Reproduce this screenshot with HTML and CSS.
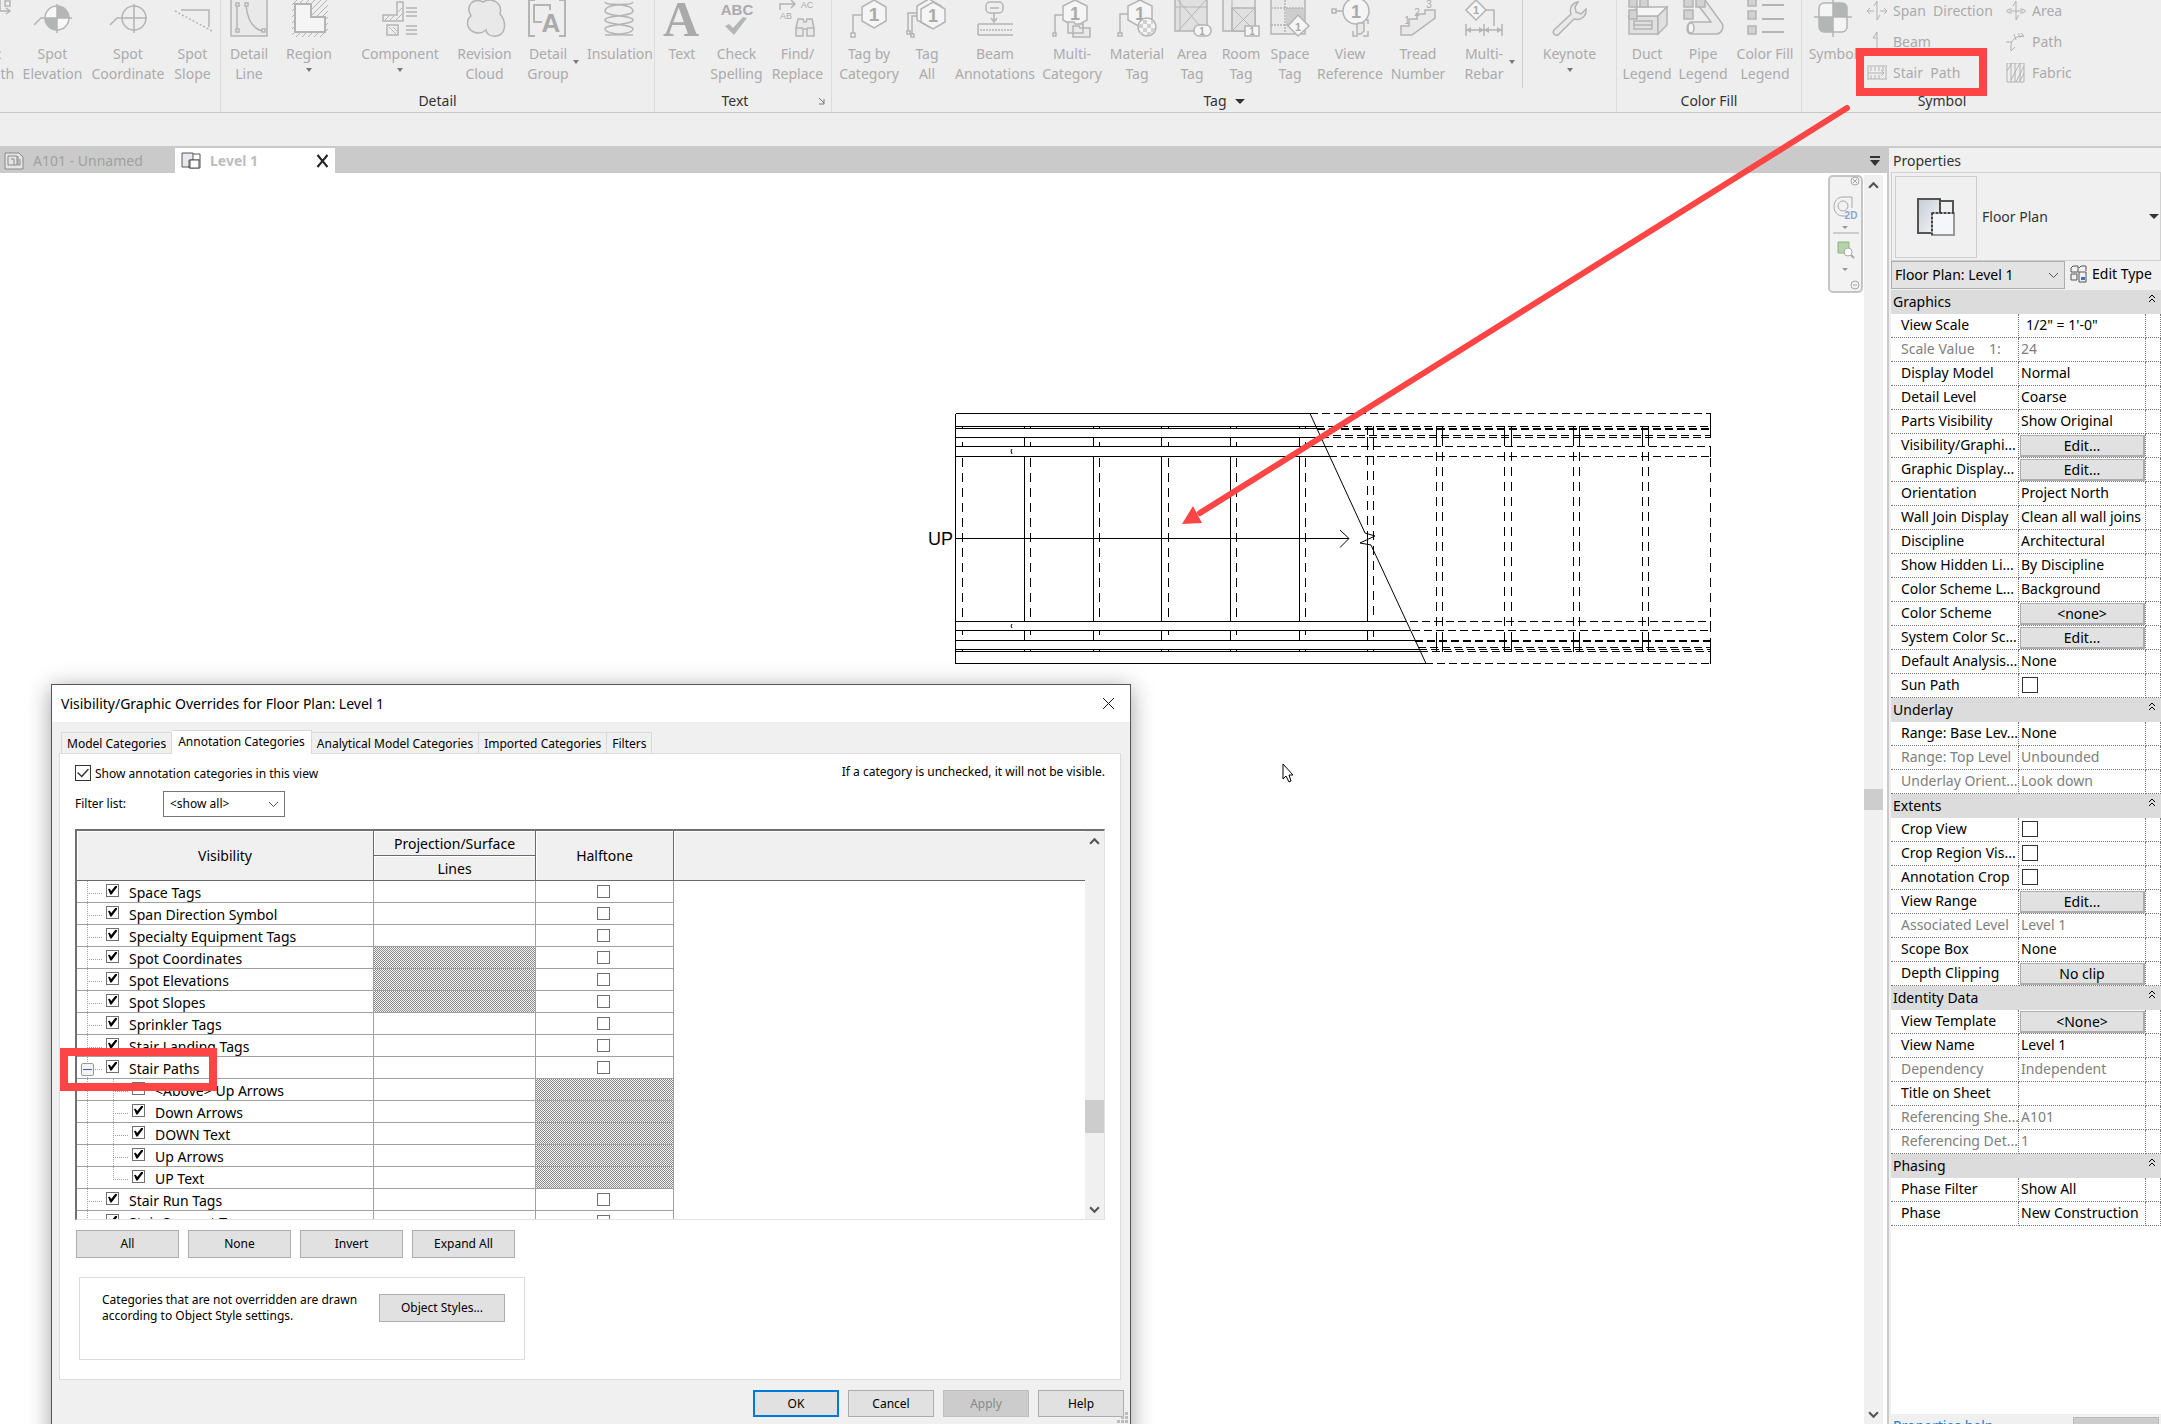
FILE: index.html
```html
<!DOCTYPE html>
<html lang="en">
<head>
<meta charset="utf-8">
<title>Floor Plan: Level 1</title>
<link rel="stylesheet" href="styles.css">
</head>
<body>
<header class="ribbon">
  <section class="group group-dimension">
    <div class="tools">
      <button class="tool" type="button"><svg class="ico" viewBox="0 0 44 44"><path d="M36 1h5v5h-5zM31 0v11h9M37 8l4 3-4 3"/></svg><span>Arc<br>Length</span></button>
      <button class="tool" type="button"><svg class="ico" viewBox="0 0 44 44"><circle cx="26" cy="18" r="12" fill="#f8f8f8"/><path class="solid" d="M26 18V6a12 12 0 0 1 12 12zM26 18v12a12 12 0 0 1-12-12z"/><path d="M3 25l7-7h31M26 4v29"/></svg><span>Spot<br>Elevation</span></button>
      <button class="tool" type="button"><svg class="ico" viewBox="0 0 44 44"><circle cx="28" cy="18" r="12"/><path d="M4 25l7-7h30M28 4v29"/></svg><span>Spot<br>Coordinate</span></button>
      <button class="tool" type="button"><svg class="ico" viewBox="0 0 44 44"><path d="M10 10h28v17"/><path d="M4 11l37 20" stroke-dasharray="2 2"/></svg><span>Spot<br>Slope</span></button>
    </div>
  </section>
  <section class="group group-detail">
    <div class="tools">
      <button class="tool" type="button"><svg class="ico" viewBox="0 0 44 44"><path class="pale" d="M4-3h36v39H4z"/><path d="M10 5v26M19 5q2 22 16 26"/><path class="node" d="M9 3h3v3H9zM9 29h3v3H9zM18 3h3v3h-3zM35 29h3v3h-3z"/></svg><span>Detail<br>Line</span></button>
      <button class="tool" type="button"><svg class="ico" viewBox="0 0 44 44"><path class="thin" d="M5 5l5-5M5 11L16 0M5 17L22 0M5 23L28 0M5 29L34 0M5 35L40 0M9 37L41 5M15 37l26-26M21 37l20-20M27 37l14-14M33 37l8-8"/><path d="M8 4h16v13h14v15H8z" fill="#f5f5f5" stroke-width="2"/></svg><span>Region</span><i class="caret"></i></button>
      <button class="tool" type="button"><svg class="ico" viewBox="0 0 44 44"><path d="M19 2h6v19H5v-6h14zM9 25h11v10H9z"/><path class="thin" d="M7 20l4-4M12 20l4-4M18 20l6-6M20 12l4-4M11 27l7 7M15 27l4 4"/><path d="M28 8h11M28 12h11M28 16h11M28 26h11M28 30h11M28 34h11"/></svg><span>Component</span><i class="caret"></i></button>
      <button class="tool" type="button"><svg class="ico" viewBox="0 0 44 44"><path class="pale" d="M8 16C2 6 10-3 20 2c8-5 20 0 17 12 7 8 6 21-4 22-6 1-10-3-10-6-7 6-16 2-18-4-1-4 0-8 3-10z"/></svg><span>Revision<br>Cloud</span></button>
      <button class="tool" type="button"><svg class="ico" viewBox="0 0 44 44"><path d="M9 0H3v36h6M33 0h6v36h-6M16 22H8V5h16v5" stroke-width="2"/><text x="25" y="32" font-size="26" font-weight="700">A</text></svg><span>Detail<br>Group</span><i class="caret side"></i></button>
      <button class="tool" type="button"><svg class="ico" viewBox="0 0 44 44"><path d="M7 2C9 6 16 3 24 5c7 1 11 3 11 6 0 6-28 4-28 9s28 4 28 9c0 4-14 6-28 6M35 2C33 6 26 3 18 5 11 6 7 8 7 11c0 6 28 4 28 9S7 24 7 29c0 4 14 6 28 6"/></svg><span>Insulation</span></button>
    </div>
    <h2>Detail</h2>
  </section>
  <section class="group group-text">
    <div class="tools">
      <button class="tool" type="button"><svg class="ico" viewBox="0 0 44 44"><text class="serif" x="21" y="36" font-size="50" font-weight="700">A</text></svg><span>Text</span></button>
      <button class="tool" type="button"><svg class="ico" viewBox="0 0 44 44"><text x="22" y="15" font-size="15" font-weight="700">ABC</text><path class="solid" d="M10 26l4-2 4 4 10-11 4 1-13 17z"/></svg><span>Check<br>Spelling</span></button>
      <button class="tool" type="button"><svg class="ico" viewBox="0 0 44 44"><path d="M4 10V4h14M15 0l4 4-4 4"/><text x="31" y="8" font-size="9">AC</text><text x="10" y="19" font-size="9">AB</text><path class="pale" d="M22 19h5l1 3h2l1-3h5l2 9v8h-7v-7h-4v7h-7v-8zM20 28h7M31 28h7"/></svg><span>Find/<br>Replace</span></button>
    </div>
    <h2>Text <svg class="launcher" viewBox="0 0 8 8"><path d="M1 1l5 5M6 2v5H1" /></svg></h2>
  </section>
  <section class="group group-tag">
    <div class="tools">
      <button class="tool" type="button"><svg class="ico" viewBox="0 0 44 44"><path d="M15 15H6v18"/><path class="node" d="M4 33h4v4H4z"/><path class="white" d="M27 0l12 7v14l-12 7-12-7V7z"/><text x="27" y="21" font-size="19" font-weight="700">1</text></svg><span>Tag by<br>Category</span></button>
      <button class="tool" type="button"><svg class="ico" viewBox="0 0 44 44"><path d="M14 13H3v18M18 16H7v18"/><path class="node" d="M2 31h3v3H2zM6 34h3v3H6z"/><path class="white" d="M24-1l12 7v14l-12 7-12-7V6z"/><path class="white" d="M28 2l12 7v13l-12 7-12-7V9z"/><text x="28" y="22" font-size="18" font-weight="700">1</text></svg><span>Tag<br>All</span></button>
      <button class="tool" type="button"><svg class="ico" viewBox="0 0 44 44"><rect x="13" y="2" width="17" height="11" rx="4"/><path d="M17 8h9M21 13v9M18 18l3 4 3-4M5 24h35M5 35h35M5 24v11"/><path d="M7 30h32" stroke-dasharray="2 1"/></svg><span>Beam<br>Annotations</span></button>
      <button class="tool" type="button"><svg class="ico" viewBox="0 0 44 44"><path d="M13 15H5v18"/><path class="node" d="M3 33h3v3H3z"/><path class="white" d="M25 0l12 6v14l-12 7-12-7V6z"/><text x="25" y="20" font-size="18" font-weight="700">1</text><path class="pale" d="M18 22h6l1 2h8v9H18zM23 26h6l1 2h10v9H23z"/></svg><span>Multi-<br>Category</span></button>
      <button class="tool" type="button"><svg class="ico" viewBox="0 0 44 44"><path d="M14 14H5v19"/><path class="node" d="M3 33h4v3H3z"/><path class="white" d="M25 0l12 6v14l-12 7-12-7V6z"/><text x="25" y="20" font-size="18" font-weight="700">1</text><circle class="white" cx="32" cy="27" r="9"/><path class="check" d="M28 20h4v4h-4zM36 20h2v4h-2zM24 24h4v4h-4zM32 24h4v4h-4zM28 28h4v4h-4zM36 28h4v4h-4zM25 32h3v2h-3zM32 32h4v3h-4z"/></svg><span>Material<br>Tag</span></button>
      <button class="tool" type="button"><svg class="ico" viewBox="0 0 44 44"><path class="dim" d="M5-3h32v34H5z"/><path class="thin" d="M5 7h32M10-3v34M8 0l26 31M36 0L8 31"/><rect class="white" x="24" y="25" width="17" height="11" rx="5"/><text x="32" y="35" font-size="10" font-weight="700">1</text></svg><span>Area<br>Tag</span></button>
      <button class="tool" type="button"><svg class="ico" viewBox="0 0 44 44"><path class="pale" d="M4-3h32v34H4z"/><path class="dim" d="M13 8h23v23H13z"/><path class="thin" d="M13-3v34M13 8l23 23M36 8L13 31"/><rect class="white" x="26" y="26" width="14" height="10"/><text x="33" y="35" font-size="10" font-weight="700">1</text></svg><span>Room<br>Tag</span></button>
      <button class="tool" type="button"><svg class="ico" viewBox="0 0 44 44"><path class="pale" d="M3-3h34v37H3z"/><path fill="#cdcdcd" stroke="none" d="M18 8h18v17H18z"/><path d="M3 8h34M3 25h34M17-3v37" stroke-dasharray="2 1"/><path class="white" d="M30 15l11 11-11 10-10-10z"/><text x="30" y="31" font-size="11" font-weight="700">1</text></svg><span>Space<br>Tag</span></button>
      <button class="tool" type="button"><svg class="ico" viewBox="0 0 44 44"><path d="M4 9h4v4H4zM8 11h8M25 24v-4h5M35 20h5v4M40 31v5h-5M30 36h-5v-5"/><circle class="white" cx="28" cy="11" r="13"/><text x="28" y="18" font-size="18" font-weight="700">1</text><path class="pale" d="M30 23h6v8l-3 3h-4v-9z"/></svg><span>View<br>Reference</span></button>
      <button class="tool" type="button"><svg class="ico" viewBox="0 0 44 44"><path class="pale" d="M5 35v-9h8v-7h8v-5h8v-4h10v8L16 35z"/><text x="11" y="24" font-size="10">1</text><text x="21" y="16" font-size="10">2</text><text x="33" y="8" font-size="10">3</text></svg><span>Tread<br>Number</span></button>
      <button class="tool" type="button"><svg class="ico" viewBox="0 0 44 44"><path class="white" d="M14 0l10 10-10 10L4 10z"/><text x="14" y="14" font-size="11" font-weight="700">1</text><path d="M24 10h8v16M4 24v12M22 24v12M40 24v12M4 30h36"/><path class="solid" d="M4 30l5-3v6zM22 30l-5-3v6zM22 30l5-3v6zM40 30l-5-3v6z"/></svg><span>Multi-<br>Rebar</span><i class="caret side"></i></button>
      <button class="tool divided" type="button"><svg class="ico" viewBox="0 0 44 44"><path class="pale" d="M30 2c-6 1-9 6-7 12L6 30c-3 4 3 7 5 4l15-15c8 2 13-4 12-10l-5 5-5-2-1-5z"/></svg><span>Keynote</span><i class="caret"></i></button>
    </div>
    <h2>Tag <i class="caret big"></i></h2>
  </section>
  <section class="group group-fill">
    <div class="tools">
      <button class="tool" type="button"><svg class="ico" viewBox="0 0 44 44"><path class="dim" d="M4 16h29v18H4z"/><path class="white" d="M4 16l9-9h29l-9 9z"/><path class="dim" d="M42 7v18l-9 9V16z"/><path d="M9 21h18v8H9zM9 25h18"/><path class="block" d="M4-3h8v10H4zM15-3h8v10h-8zM4 10h8v9H4z"/></svg><span>Duct<br>Legend</span></button>
      <button class="tool" type="button"><svg class="ico" viewBox="0 0 44 44"><path class="pale" d="M17 5l13 17H10c-4 0-6 12 0 12h26c5-1 8-8 4-12L24 0z"/><ellipse class="white" cx="10" cy="28" rx="3" ry="5"/><path class="block" d="M3-3h9v10H3zM15-3h9v10h-9zM3 10h9v9H3z"/></svg><span>Pipe<br>Legend</span></button>
      <button class="tool" type="button"><svg class="ico" viewBox="0 0 44 44"><path class="block" d="M5-3h8v9H5zM5 11h8v8H5zM5 26h8v8H5z"/><path d="M19 5h22M19 19h22M19 32h22" stroke-width="2"/></svg><span>Color Fill<br>Legend</span></button>
    </div>
    <h2>Color Fill</h2>
  </section>
  <section class="group group-symbol">
    <div class="tools">
      <button class="tool" type="button"><svg class="ico" viewBox="0 0 44 44"><rect class="white" x="8" y="3" width="28" height="29" rx="5"/><path class="solid" d="M22 3h9a5 5 0 0 1 5 5v9H22zM22 17v15h-9a5 5 0 0 1-5-5V17z"/><path d="M3 17h38M22-2v39"/></svg><span>Symbol</span></button>
      <div class="stack">
        <button class="mini" type="button"><svg viewBox="0 0 20 20"><path d="M10 0v19M10 0L7 5M10 19l3-5M0 10h7M13 10h7M3 7l-3 3 3 3M17 7l3 3-3 3"/></svg>Span  Direction</button>
        <button class="mini" type="button"><svg viewBox="0 0 20 20"><path d="M10 0v19M10 0L6 6h4M10 19h3"/></svg>Beam</button>
        <button class="mini" type="button"><svg viewBox="0 0 20 20"><path d="M0 3h20M0 16h20M1 4v12M4 4v4M8 4v4M12 4v4M16 4v4M4 12v4M8 12v4M12 12v4M19 4v12M1 10h16M14 7l3 3-3 3"/></svg>Stair  Path</button>
      </div>
      <div class="stack">
        <button class="mini" type="button"><svg viewBox="0 0 20 20"><path d="M10 0v19M10 0L7 5M10 19l3-5M6 8c-7 0-7 4 0 4M14 8c7 0 7 4 0 4M3 10h14"/></svg>Area</button>
        <button class="mini" type="button"><svg viewBox="0 0 20 20"><path d="M5 19V14C5 8 9 4 18 4M5 19l4-4M0 10h5M8 2l2 6M13 1v4l5-1-3-3"/></svg>Path</button>
        <button class="mini" type="button"><svg viewBox="0 0 20 20"><path d="M1 0h17v19H1zM1 8l5-8M5 0v19M5 17L14 0M9 0v19M14 0v19M10 19l8-16M14 18l4-8"/></svg>Fabric</button>
      </div>
    </div>
    <h2>Symbol</h2>
  </section>
</header>
<div class="options"></div>

<div class="workspace">
  <main class="view">
    <nav class="tabs">
      <a class="tab" href="#sheet"><svg viewBox="0 0 20 18"><path d="M1 1h14l4 4v12H1z" fill="#e4e4e4"/><path d="M4 4h9v9H4zM7 7h3v6M14 4v9h2V7"/></svg>A101 - Unnamed</a>
      <div class="tab active"><svg viewBox="0 0 20 18"><path d="M1 1h11v14H1z" fill="#e6e9ee"/><path d="M12 2h7v14H8V8h11" fill="none"/><path d="M9 8h9v8H9z" fill="#fff"/></svg><a href="#level1">Level 1</a><button class="tab-close" type="button" aria-label="Close view"><svg viewBox="0 0 12 14"><path d="M1 1l10 12M11 1L1 13"/></svg></button></div>
      <button class="tab-list" type="button" aria-label="List views"><svg viewBox="0 0 10 10"><path d="M0 0h10v2H0zM0 4h10L5 10z"/></svg></button>
    </nav>
    <div class="canvas">
      <div class="sheet">
        <svg class="stair" viewBox="920 400 800 280" width="800" height="280">
          <text x="928" y="545" font-size="18">UP</text>
          <path d="M955.500 413.500H1310M955.500 426.500H1316M955.500 428.500H1317M955.500 437.500H1321M955.500 446.500H1325M955.500 456.500H1329M955.500 621.500H1406M955.500 630.500H1410M955.500 640.500H1415M955.500 649.500H1419M955.500 651.500H1420M955.500 663.500H1425M955.500 413.500V663.500M955 538.500H1349"/>
          <path d="M1024.500 437.500V446M1093.500 437.500V446M1161.500 437.500V446M1230.500 437.500V446M1299.500 437.500V446M1024.500 456.500V621M1093.500 456.500V621M1161.500 456.500V621M1230.500 456.500V621M1299.500 456.500V621M1367.500 538V621M1024.500 630V640M1093.500 630V640M1161.500 630V640M1230.500 630V640M1299.500 630V640M1367.500 630V640M962.500 426v3M1030.500 426v3M1099.500 426v3M1168.500 426v3M1236.500 426v3M1305.500 426v3M962.500 649v3M1030.500 649v3M1099.500 649v3M1168.500 649v3M1236.500 649v3M1305.500 649v3M1024.500 426v3M1093.500 426v3M1161.500 426v3M1230.500 426v3M1299.500 426v3M1024.500 649v3M1093.500 649v3M1161.500 649v3M1230.500 649v3M1299.500 649v3M1367.500 649v3M1373.500 649v3"/>
          <path d="M962.500 442v4M1030.500 442v4M1099.500 442v4M1168.500 442v4M1236.500 442v4M1305.500 442v4M962.500 630v5M1030.500 630v5M1099.500 630v5M1168.500 630v5M1236.500 630v5M1305.500 630v5M1367.500 437V446M1373.500 437V446M1373.500 630v7"/>
          <path stroke-dasharray="9 6" d="M962.500 458V620M1030.500 458V620M1099.500 458V620M1168.500 458V620M1236.500 458V620M1305.500 458V620M1373.500 426V620M1367.500 426V538"/>
          <path stroke-dasharray="9 6" d="M1436.500 437V640M1442.500 437V640M1504.500 437V640M1511.500 437V640M1573.500 437V640M1579.500 437V640M1642.500 437V640M1648.500 437V640M1710.500 458V640"/>
          <path d="M1436.500 426v11M1442.500 426v11M1504.500 426v11M1511.500 426v11M1573.500 426v11M1579.500 426v11M1642.500 426v11M1648.500 426v11M1436.500 640v12M1442.500 640v12M1504.500 640v12M1511.500 640v12M1573.500 640v12M1579.500 640v12M1642.500 640v12M1648.500 640v12"/>
          <path d="M1710.500 413V437M1710.500 446V457M1710.500 621V631M1710.500 640V664"/>
          <path stroke-dasharray="8 4" d="M1310 413.500H1711M1316 426.500H1711M1317 428.500H1711M1317 429.500H1711M1321 435.500H1711M1321 437.500H1711M1325 446.500H1711M1329 456.500H1711M1410 621.500H1711M1412 630.500H1711M1415 640.500H1711M1415 641.500H1711M1418 647.500H1711M1419 649.500H1711M1420 651.500H1711M1425 663.500H1711"/>
          <path class="smooth" d="M1310 413.500L1365 533L1375 536L1360 543L1371 545L1426 663.500M1340 530l9 8.500l-9 9M1012 449l-1 2 1 3M1012 624l-1 2 1 2"/>
        </svg>
        <svg class="cursor" viewBox="0 0 12 20" width="12" height="20"><path d="M1 1v15l3-3 3 6 2-1-2-6h4z"/></svg>
        <div class="navbar">
          <svg viewBox="0 0 35 118" width="35" height="118">
            <circle cx="27" cy="6" r="4"/><path d="M25 4l4 4M29 4l-4 4"/>
            <path d="M15 22c-12 0-12 19 0 19h4M15 22h9v11"/><circle cx="15" cy="31" r="5"/>
            <text x="23" y="44" font-size="10" font-weight="700">2D</text>
            <path class="fill" d="M14 51h6l-3 3zM14 93h6l-3 3z"/><path d="M5 58h26"/>
            <path class="green" d="M10 67h11v11H10z"/><circle cx="20" cy="77" r="4" fill="#fff"/><path d="M23 80l3 3" stroke-width="2"/>
            <circle cx="27" cy="110" r="4"/><path d="M25 110h4"/>
          </svg>
        </div>
      </div>
      <div class="scroll">
        <button type="button" aria-label="Scroll up"><svg viewBox="0 0 10 8"><path d="M1 6l4-4 4 4"/></svg></button>
        <div class="gap-before"></div><div class="thumb"></div><div class="gap-after"></div>
        <button type="button" aria-label="Scroll down"><svg viewBox="0 0 10 8"><path d="M1 2l4 4 4-4"/></svg></button>
      </div>
    </div>
  </main>

  <aside class="props">
    <h2 class="props-title">Properties</h2>
    <div class="type">
      <div class="thumbnail"><svg viewBox="0 0 40 40" width="40" height="40"><defs><linearGradient id="sheet-back" x1="0" y1="0" x2="1" y2="1"><stop offset="0" stop-color="#c6ccd6"/><stop offset="1" stop-color="#f6f7f9"/></linearGradient></defs><path d="M2 2h22v34H2z" fill="url(#sheet-back)"/><path d="M24 4h13v12" fill="none"/><path class="front" d="M16 16h22v22H16z"/><path class="dash" d="M24 2v14M16 16h22M16 16v22"/></svg></div>
      <span>Floor Plan</span><i class="caret big"></i>
    </div>
    <div class="instance">
      <select aria-label="Instance"><option>Floor Plan: Level 1</option></select>
      <button class="edit-type" type="button"><svg viewBox="0 0 18 18" width="18" height="18"><path d="M1 3l2-2h5v6H1zM9 3l2-2h5v5M1 9h6v6H1zM9 7h7v10H9z"/><path class="blue" d="M11 12h4v3h-4z"/></svg>Edit Type</button>
    </div>
    <div class="props-body">
    <table class="props-table">
      <colgroup><col class="c-name"><col><col class="c-end"></colgroup>
      <tbody>
      <tr class="sec"><th colspan="2">Graphics</th><th><svg class="up2" viewBox="0 0 6 8"><path d="M0 4l3-3 3 3M0 8l3-3 3 3"/></svg></th></tr>
      <tr><td>View Scale</td><td class="in">1/2" = 1'-0"</td><td></td></tr>
      <tr class="off"><td>Scale Value &nbsp;&nbsp; 1:</td><td>24</td><td></td></tr>
      <tr><td>Display Model</td><td>Normal</td><td></td></tr>
      <tr><td>Detail Level</td><td>Coarse</td><td></td></tr>
      <tr><td>Parts Visibility</td><td>Show Original</td><td></td></tr>
      <tr><td>Visibility/Graphi...</td><td class="b"><button type="button">Edit...</button></td><td></td></tr>
      <tr><td>Graphic Display...</td><td class="b"><button type="button">Edit...</button></td><td></td></tr>
      <tr><td>Orientation</td><td>Project North</td><td></td></tr>
      <tr><td>Wall Join Display</td><td>Clean all wall joins</td><td></td></tr>
      <tr><td>Discipline</td><td>Architectural</td><td></td></tr>
      <tr><td>Show Hidden Li...</td><td>By Discipline</td><td></td></tr>
      <tr><td>Color Scheme L...</td><td>Background</td><td></td></tr>
      <tr><td>Color Scheme</td><td class="b"><button type="button">&lt;none&gt;</button></td><td></td></tr>
      <tr><td>System Color Sc...</td><td class="b"><button type="button">Edit...</button></td><td></td></tr>
      <tr><td>Default Analysis...</td><td>None</td><td></td></tr>
      <tr><td><label for="sun">Sun Path</label></td><td><input id="sun" type="checkbox"></td><td></td></tr>
      <tr class="sec"><th colspan="2">Underlay</th><th><svg class="up2" viewBox="0 0 6 8"><path d="M0 4l3-3 3 3M0 8l3-3 3 3"/></svg></th></tr>
      <tr><td>Range: Base Lev...</td><td>None</td><td></td></tr>
      <tr class="off"><td>Range: Top Level</td><td>Unbounded</td><td></td></tr>
      <tr class="off"><td>Underlay Orient...</td><td>Look down</td><td></td></tr>
      <tr class="sec"><th colspan="2">Extents</th><th><svg class="up2" viewBox="0 0 6 8"><path d="M0 4l3-3 3 3M0 8l3-3 3 3"/></svg></th></tr>
      <tr><td><label for="crop">Crop View</label></td><td><input id="crop" type="checkbox"></td><td></td></tr>
      <tr><td><label for="cropvis">Crop Region Vis...</label></td><td><input id="cropvis" type="checkbox"></td><td></td></tr>
      <tr><td><label for="anno">Annotation Crop</label></td><td><input id="anno" type="checkbox"></td><td></td></tr>
      <tr><td>View Range</td><td class="b"><button type="button">Edit...</button></td><td></td></tr>
      <tr class="off"><td>Associated Level</td><td>Level 1</td><td></td></tr>
      <tr><td>Scope Box</td><td>None</td><td></td></tr>
      <tr><td>Depth Clipping</td><td class="b"><button type="button">No clip</button></td><td></td></tr>
      <tr class="sec"><th colspan="2">Identity Data</th><th><svg class="up2" viewBox="0 0 6 8"><path d="M0 4l3-3 3 3M0 8l3-3 3 3"/></svg></th></tr>
      <tr><td>View Template</td><td class="b"><button type="button">&lt;None&gt;</button></td><td></td></tr>
      <tr><td>View Name</td><td>Level 1</td><td></td></tr>
      <tr class="off"><td>Dependency</td><td>Independent</td><td></td></tr>
      <tr><td>Title on Sheet</td><td></td><td></td></tr>
      <tr class="off"><td>Referencing She...</td><td>A101</td><td></td></tr>
      <tr class="off"><td>Referencing Det...</td><td>1</td><td></td></tr>
      <tr class="sec"><th colspan="2">Phasing</th><th><svg class="up2" viewBox="0 0 6 8"><path d="M0 4l3-3 3 3M0 8l3-3 3 3"/></svg></th></tr>
      <tr><td>Phase Filter</td><td>Show All</td><td></td></tr>
      <tr><td>Phase</td><td>New Construction</td><td></td></tr>
      </tbody>
    </table>
    </div>
    <footer class="props-foot"><a href="#help">Properties help</a><button type="button" disabled>Apply</button></footer>
  </aside>

  <section class="dialog" role="dialog" aria-labelledby="dlg-title">
    <header class="dlg-head"><h1 id="dlg-title">Visibility/Graphic Overrides for Floor Plan: Level 1</h1><button class="dlg-close" type="button" aria-label="Close"><svg viewBox="0 0 13 13"><path d="M1 1l11 11M12 1L1 12"/></svg></button></header>
    <div class="dlg-tabs" role="tablist">
      <button type="button" role="tab">Model Categories</button><button class="on" type="button" role="tab" aria-selected="true">Annotation Categories</button><button type="button" role="tab">Analytical Model Categories</button><button type="button" role="tab">Imported Categories</button><button type="button" role="tab">Filters</button>
    </div>
    <div class="dlg-page">
      <div class="row-top"><label><input type="checkbox" checked> Show annotation categories in this view</label><p>If a category is unchecked, it will not be visible.</p></div>
      <div class="row-filter"><label for="filter">Filter list:</label><select id="filter"><option>&lt;show all&gt;</option></select></div>
      <div class="grid">
        <div class="grid-clip">
        <table class="cats">
          <colgroup><col class="w-vis"><col class="w-proj"><col class="w-half"><col></colgroup>
          <thead>
            <tr><th rowspan="2">Visibility</th><th>Projection/Surface</th><th rowspan="2">Halftone</th><th rowspan="2" class="rest"></th></tr>
            <tr><th>Lines</th></tr>
          </thead>
          <tbody>
            <tr><td class="tree"><label><input type="checkbox" checked>Space Tags</label></td><td></td><td class="half"><input type="checkbox" aria-label="Halftone"></td></tr>
            <tr><td class="tree"><label><input type="checkbox" checked>Span Direction Symbol</label></td><td></td><td class="half"><input type="checkbox" aria-label="Halftone"></td></tr>
            <tr><td class="tree"><label><input type="checkbox" checked>Specialty Equipment Tags</label></td><td></td><td class="half"><input type="checkbox" aria-label="Halftone"></td></tr>
            <tr><td class="tree"><label><input type="checkbox" checked>Spot Coordinates</label></td><td class="na"></td><td class="half"><input type="checkbox" aria-label="Halftone"></td></tr>
            <tr><td class="tree"><label><input type="checkbox" checked>Spot Elevations</label></td><td class="na"></td><td class="half"><input type="checkbox" aria-label="Halftone"></td></tr>
            <tr><td class="tree"><label><input type="checkbox" checked>Spot Slopes</label></td><td class="na"></td><td class="half"><input type="checkbox" aria-label="Halftone"></td></tr>
            <tr><td class="tree"><label><input type="checkbox" checked>Sprinkler Tags</label></td><td></td><td class="half"><input type="checkbox" aria-label="Halftone"></td></tr>
            <tr><td class="tree"><label><input type="checkbox" checked>Stair Landing Tags</label></td><td></td><td class="half"><input type="checkbox" aria-label="Halftone"></td></tr>
            <tr><td class="tree parent"><button class="fold" type="button" aria-label="Collapse"></button><label><input type="checkbox" checked>Stair Paths</label></td><td></td><td class="half"><input type="checkbox" aria-label="Halftone"></td></tr>
            <tr><td class="tree child"><label><input type="checkbox">&lt;Above&gt; Up Arrows</label></td><td></td><td class="na"></td></tr>
            <tr><td class="tree child"><label><input type="checkbox" checked>Down Arrows</label></td><td></td><td class="na"></td></tr>
            <tr><td class="tree child"><label><input type="checkbox" checked>DOWN Text</label></td><td></td><td class="na"></td></tr>
            <tr><td class="tree child"><label><input type="checkbox" checked>Up Arrows</label></td><td></td><td class="na"></td></tr>
            <tr><td class="tree child last"><label><input type="checkbox" checked>UP Text</label></td><td></td><td class="na"></td></tr>
            <tr><td class="tree"><label><input type="checkbox" checked>Stair Run Tags</label></td><td></td><td class="half"><input type="checkbox" aria-label="Halftone"></td></tr>
            <tr><td class="tree"><label><input type="checkbox" checked>Stair Support Tags</label></td><td></td><td class="half"><input type="checkbox" aria-label="Halftone"></td></tr>
          </tbody>
        </table>
        </div>
        <div class="scroll list-scroll">
          <button type="button" aria-label="Scroll up"><svg viewBox="0 0 10 8"><path d="M1 6l4-4 4 4"/></svg></button>
          <div class="gap-before"></div><div class="thumb"></div><div class="gap-after"></div>
          <button type="button" aria-label="Scroll down"><svg viewBox="0 0 10 8"><path d="M1 2l4 4 4-4"/></svg></button>
        </div>
      </div>
      <div class="row-buttons"><button class="btn" type="button">All</button><button class="btn" type="button">None</button><button class="btn" type="button">Invert</button><button class="btn" type="button">Expand All</button></div>
      <div class="note"><p>Categories that are not overridden are drawn<br>according to Object Style settings.</p><button class="btn wide" type="button">Object Styles...</button></div>
    </div>
    <footer class="dlg-foot"><button class="btn default" type="button">OK</button><button class="btn" type="button">Cancel</button><button class="btn" type="button" disabled>Apply</button><button class="btn" type="button">Help</button></footer>
    <svg class="grip" viewBox="0 0 12 12"><path d="M8 0h3v3H8zM4 4h3v3H4zM8 4h3v3H8zM0 8h3v3H0zM4 8h3v3H4zM8 8h3v3H8z"/></svg>
  </section>
</div>

<div class="mark mark-tool"></div>
<div class="mark mark-row"></div>
<svg class="mark-arrow" viewBox="1170 90 700 450" width="700" height="450"><path class="shaft" d="M1847 108L1200 513"/><path class="head" d="M1182 524l11-18 9 17z"/></svg>
</body>
</html>
```
FILE: styles.css
```css
* { box-sizing: border-box; }
body {
  margin: 0;
  height: 100vh;
  display: flex;
  flex-direction: column;
  overflow: hidden;
  position: relative;
  background: #fff;
  color: #000;
  font: 14px/20px "Noto Sans", "Open Sans", sans-serif;
}
h1, h2, p { margin: 0; font-size: inherit; font-weight: 400; }
button, select, input { font: inherit; color: inherit; margin: 0; }
button { border: 0; padding: 0; background: none; }
a { color: inherit; text-decoration: none; }
svg { display: block; fill: none; flex: none; }

/* Ribbon */
.ribbon { display: flex; background: #eee; border-bottom: 1px solid #c8c8c8; height: 113px; flex: none; overflow: hidden; }
.group { display: flex; flex-direction: column; flex: none; border-right: 1px solid #dcdcdc; }
.group:last-child { border-right: 0; }
.group h2 { text-align: center; color: #333; line-height: 22px; margin-top: 2px; display: flex; justify-content: center; align-items: center; gap: 8px; position: relative; }
.tools { display: grid; height: 88px; }
.group-dimension { margin-left: -32px; }
.group-dimension .tools { grid-template-columns: 46px 77px 74px 55px; }
.group-detail .tools { grid-template-columns: 56px 64px 118px 51px 76px 68px; }
.group-text .tools { grid-template-columns: 54px 55px 67px; }
.group-text h2 { padding-right: 16px; }
.group-tag .tools { grid-template-columns: 74px 42px 94px 60px 70px 40px 58px 40px 80px 56px 76px 94px; }
.group-fill .tools { grid-template-columns: 60px 52px 72px; }
.group-symbol .tools { grid-template-columns: 65px 139px 76px; }
.tool { display: flex; flex-direction: column; align-items: center; color: #ababab; position: relative; white-space: nowrap; min-width: 0; }
.group-symbol .tool { width: 62px; }
.tool.divided { border-left: 1px solid #cfcfcf; }
.ico { width: 44px; height: 44px; stroke: #b4b4b4; stroke-width: 1.5; overflow: visible; }
.ico .thin { stroke-width: 1; }
.ico .solid { fill: #b4b6b6; stroke: none; }
.ico .block { fill: #d2d2d2; }
.ico .check { fill: #d0d0d0; stroke: none; }
.ico .pale { fill: #e9e9e9; }
.ico .dim { fill: #e0e0e0; }
.ico .white, .ico .node { fill: #f5f5f5; }
.ico text { fill: #aaa; stroke: none; text-anchor: middle; font-family: "Liberation Sans", sans-serif; }
.ico text.serif { font-family: "Liberation Serif", serif; }
.caret { width: 0; height: 0; border: 3px solid transparent; border-top: 4px solid #777; border-bottom: 0; margin-top: 4px; }
.caret.side { position: absolute; left: calc(50% + 25px); top: 60px; margin-top: 0; }
.caret.big { border-width: 5px 5px 0; border-top-color: #333; margin-top: 0; }
.launcher { width: 8px; height: 8px; stroke: #777; position: absolute; right: 5px; top: 7px; }
.stack { display: flex; flex-direction: column; gap: 9px; }
.mini { display: flex; align-items: center; gap: 6px; height: 22px; white-space: pre; color: #ababab; }
.mini svg { width: 20px; height: 20px; stroke: #b2b2b2; }
.options { height: 33px; flex: none; background: #eee; }

/* Workspace */
.workspace { flex: 1; min-height: 0; display: flex; position: relative; border-top: 2px solid #cacaca; }
.view { flex: 1; min-width: 0; display: flex; flex-direction: column; }
.tabs { height: 25px; flex: none; display: flex; background: #cacaca; }
.tab { width: 175px; padding-left: 4px; display: flex; align-items: center; gap: 9px; color: #a0a0a0; }
.tab svg { width: 20px; height: 18px; stroke: #888; }
.tab.active { width: 160px; padding: 0 6px; background: #fff; color: #bdbdbd; font-weight: 700; }
.tab.active > svg { stroke: #555; }
.tab-close { margin-left: auto; }
.tab-close svg { width: 13px; height: 14px; stroke: #222; stroke-width: 2; }
.tab-list { margin-left: auto; padding: 0 9px; }
.tab-list svg { width: 10px; height: 10px; fill: #333; }
.canvas { flex: 1; min-height: 0; display: flex; border-right: 2px solid #cacaca; }
.sheet { flex: 1; position: relative; }
.stair { position: absolute; left: 920px; top: 227px; stroke: #000; shape-rendering: crispEdges; }
.stair .smooth { shape-rendering: auto; }
.stair text { fill: #000; stroke: none; font-family: "Liberation Sans", sans-serif; }
.cursor { position: absolute; left: 1282px; top: 590px; stroke: #000; fill: #fff; }
.navbar { position: absolute; right: 1px; top: 2px; width: 35px; height: 118px; border: 2px solid #c4c4c4; border-radius: 5px; background: #f2f2f2; }
.navbar svg { margin: -2px; stroke: #a8a8a8; }
.navbar .fill { fill: #999; stroke: none; }
.navbar .green { fill: #b5d3a8; stroke: #8fb283; }
.navbar text { fill: #8aa7d0; stroke: none; text-anchor: middle; font-family: "Liberation Sans", sans-serif; }
.scroll { width: 19px; flex: none; display: flex; flex-direction: column; background: #f0f0f0; }
.canvas .scroll { margin: 2px 4px 0 0; }
.scroll button { height: 20px; display: grid; place-items: center; flex: none; }
.scroll svg { width: 11px; height: 9px; stroke: #555; stroke-width: 2; }
.scroll .thumb { height: 21px; background: #cdcdcd; flex: none; }
.gap-before { flex: 594; }
.gap-after { flex: 594; }

/* Properties */
.props { width: 272px; flex: none; display: flex; flex-direction: column; background: #f0f0f0; border-left: 2px solid #f0f0f0; }
.props-title { height: 24px; line-height: 26px; padding-left: 2px; color: #333; flex: none; }
.type { height: 89px; flex: none; display: flex; align-items: center; border: 1px solid #d0d0d0; padding: 3px 1px 3px 3px; gap: 5px; color: #333; }
.thumbnail { width: 82px; height: 82px; border: 1px solid #ccc; display: grid; place-items: center; }
.thumbnail svg { stroke: #555; stroke-width: 2; }
.thumbnail .front { fill: #f4f6f9; stroke: #999; }
.thumbnail .dash { stroke: #444; stroke-dasharray: 2 2; }
.type .caret { margin-left: auto; }
.instance { height: 29px; flex: none; display: flex; }
select { appearance: none; border: 1px solid #adadad; border-radius: 0; outline: 0; background: #e3e3e3 no-repeat right 5px center / 11px 7px url("data:image/svg+xml,%3Csvg xmlns='http://www.w3.org/2000/svg' viewBox='0 0 11 7'%3E%3Cpath d='M1 1l4.500 4.500L10 1' fill='none' stroke='%23555'/%3E%3C/svg%3E"); }
.instance select { width: 174px; height: 28px; padding: 0 3px; }
.edit-type { display: flex; align-items: center; gap: 4px; margin-left: 5px; height: 26px; }
.edit-type svg { stroke: #555; }
.edit-type .blue { fill: #3a78b5; stroke: none; }
.props-body { flex: 1; min-height: 0; background: #fff; overflow: hidden; }
.props-table { width: 100%; table-layout: fixed; border-collapse: separate; border-spacing: 0; white-space: nowrap; }
.c-name { width: 128px; }
.c-end { width: 15px; }
.props-table td { height: 24px; padding: 0 0 2px 2px; line-height: 21px; border-bottom: 1px dotted #777; border-right: 1px dotted #777; }
.props-table td:first-child { padding-left: 10px; }
.props-table .in { padding-left: 7px; }
.props-table .off td { color: #808080; }
.props-table .b { padding: 1px 0 0 1px; }
.props-table .b button { display: block; width: 100%; height: 22px; line-height: 19px; border: 1px solid #adadad; border-width: 1px 2px 2px 1px; background: #e1e1e1; }
.sec th { height: 24px; padding: 0 0 0 2px; background: #dcdcdc; font-weight: 400; text-align: left; }
.up2 { width: 6px; height: 8px; stroke: #000; margin: 0 0 8px 1px; overflow: visible; }
input[type="checkbox"] { appearance: none; display: block; width: 16px; height: 16px; border: 1px solid #333; background: #fff; flex: none; position: relative; }
.props-table input { margin-left: 1px; }
input:checked::before { content: ""; position: absolute; inset: 1px; background: #000; clip-path: polygon(0 40%, 20% 35%, 35% 60%, 85% 0, 100% 0, 100% 20%, 40% 100%, 25% 100%); }
.props-foot { height: 10px; flex: none; display: flex; justify-content: space-between; align-items: flex-start; overflow: hidden; color: #1e7fc8; }
.props-foot a { padding: 2px 0 0 2px; }
.props-foot button { width: 86px; height: 26px; margin: 3px 2px 0 0; border: 1px solid #bbb; background: #ccc; color: #888; }

/* Overrides dialog */
.dialog { position: absolute; left: 51px; top: 536px; width: 1080px; height: 760px; display: flex; flex-direction: column; border: 1px solid #555; background: #f0f0f0; box-shadow: 0 4px 22px rgba(0, 0, 0, .38); font-size: 12px; line-height: 16px; }
.dlg-head { height: 37px; flex: none; display: flex; align-items: center; justify-content: space-between; background: #fff; padding: 0 15px 0 9px; font-size: 14px; }
.dlg-close svg { width: 13px; height: 13px; stroke: #111; }
.dlg-tabs { display: flex; align-items: flex-end; padding: 8px 0 0 9px; height: 31px; flex: none; }
.dlg-tabs button { height: 21px; padding: 1px 5px 0; border: 1px solid #d9d9d9; border-width: 1px 1px 0 0; white-space: nowrap; }
.dlg-tabs button:first-child { border-left-width: 1px; }
.dlg-tabs .on { height: 24px; padding: 0 6px 2px; margin-bottom: -1px; background: #fff; position: relative; }
.dlg-page { margin: 0 9px 0 7px; height: 627px; flex: none; background: #fff; border: 1px solid #dcdcdc; padding: 11px 15px 0; display: flex; flex-direction: column; }
.row-top { display: flex; justify-content: space-between; height: 26px; flex: none; }
.row-top label { display: flex; gap: 4px; height: 16px; line-height: 18px; }
.row-top p { margin-top: -1px; }
.row-top input:checked::before { background: #333; inset: 2px 1px; clip-path: polygon(0 50%, 12% 42%, 38% 75%, 90% 8%, 100% 16%, 40% 96%); }
.row-filter { display: flex; align-items: center; height: 26px; flex: none; }
.row-filter label { width: 88px; }
.row-filter select { width: 122px; height: 26px; padding: 0 6px; background-color: #fff; border-color: #777; }
.grid { height: 391px; flex: none; margin-top: 12px; display: flex; border: solid; border-width: 2px 1px 1px 2px; border-color: #707070 #e3e3e3 #e3e3e3 #707070; overflow: hidden; font-size: 14px; }
.grid-clip { flex: 1; overflow: hidden; }
.cats { width: 100%; table-layout: fixed; border-collapse: separate; border-spacing: 0; }
.w-vis { width: 297px; }
.w-proj { width: 162px; }
.w-half { width: 138px; }
.cats th { height: 25px; padding: 1px 0 0; font-weight: 400; background: #f0f0f0; border: solid #696969; border-width: 0 1px 1px 0; box-shadow: inset 1px 1px #fff; }
.cats .rest { border-right: 0; }
.cats td { height: 22px; padding: 0; border: solid #a0a0a0; border-width: 0 1px 1px 0; }
.tree { --v: repeating-linear-gradient(#a0a0a0 0 1px, transparent 1px 2px); --h: repeating-linear-gradient(90deg, #a0a0a0 0 1px, transparent 1px 2px);
  background: var(--v) 10px 0 / 1px 100% no-repeat, var(--h) 10px 12px / 15px 1px no-repeat; position: relative; }
.tree.child { background: var(--v) 10px 0 / 1px 100% no-repeat, var(--v) 36px 0 / 1px 100% no-repeat, var(--h) 36px 12px / 15px 1px no-repeat; }
.tree.child.last { background: var(--v) 10px 0 / 1px 100% no-repeat, var(--v) 36px 0 / 1px 12px no-repeat, var(--h) 36px 12px / 15px 1px no-repeat; }
.tree label { display: flex; gap: 10px; height: 20px; line-height: 22px; padding-left: 29px; align-items: flex-start; }
.tree.child label { padding-left: 55px; }
.tree input[type="checkbox"] { margin-top: 2px; }
.cats input[type="checkbox"] { width: 13px; height: 13px; border-color: #707070; }
.half input { margin: 0 auto 0 61px; }
.cats td.na { background: repeating-conic-gradient(#8a8a8a 0 25%, #f4f4f4 0 50%) 0 0 / 2px 2px; }
.fold { position: absolute; left: 4px; top: 6px; width: 13px; height: 13px; border: 1px solid #999; border-radius: 2px; background: linear-gradient(#3c5fa8, #3c5fa8) center / 9px 1px no-repeat, #f3f3f3; }
.list-scroll .thumb { height: 33px; }
.list-scroll .gap-before { flex: 249; }
.list-scroll .gap-after { flex: 66; }
.btn { width: 103px; height: 28px; border: 1px solid #adadad; background: #e1e1e1; text-align: center; }
.row-buttons { display: flex; gap: 9px; margin: 10px 0 0 1px; }
.note { display: flex; justify-content: space-between; width: 446px; height: 83px; margin: 19px 0 0 4px; border: 1px solid #dcdcdc; padding: 14px 19px 0 22px; }
.note p { white-space: nowrap; }
.btn.wide { width: 126px; margin-top: 2px; }
.dlg-foot { display: flex; justify-content: flex-end; gap: 9px; padding: 10px 6px 0; }
.dlg-foot .btn { width: 86px; height: 27px; }
.btn.default { border: 2px solid #0078d7; }
.btn:disabled { background: #ccc; border-color: #bfbfbf; color: #888; }
.grip { position: absolute; right: 1px; top: 727px; width: 12px; height: 12px; fill: #bbb; }

/* Callouts drawn over the window */
.mark { position: absolute; border: 8px solid #fe4545; pointer-events: none; }
.mark-tool { left: 1856px; top: 48px; width: 131px; height: 48px; }
.mark-row { left: 60px; top: 1048px; width: 157px; height: 43px; }
.mark-arrow { position: absolute; left: 1170px; top: 90px; pointer-events: none; }
.mark-arrow .shaft { stroke: #fe4545; stroke-width: 6; stroke-linecap: round; }
.mark-arrow .head { fill: #fe4545; }
```
